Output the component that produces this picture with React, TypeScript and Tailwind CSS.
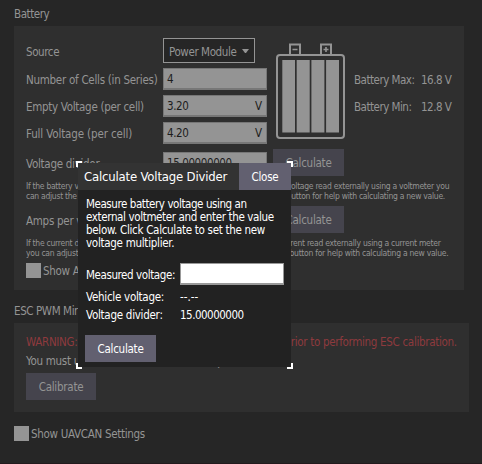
import React from "react";

type TextProps = { children: React.ReactNode; className?: string };

function Text({ children, className = "" }: TextProps) {
  return <span className={`block whitespace-pre ${className}`}>{children}</span>;
}

function Field({ value, unit }: { value: string; unit?: string }) {
  return (
    <div className="flex h-[22px] w-[104px] items-center justify-between border border-b-2 border-[#777777] bg-[#949494] pt-px pr-1 pl-[3px] text-[#1c1c1c]">
      <Text className="tracking-[-0.4px]">{value}</Text>
      {unit && <Text>{unit}</Text>}
    </div>
  );
}

function Row({ label, spacing, children, className = "h-[22px]" }: { label: string; spacing: string; children: React.ReactNode; className?: string }) {
  return (
    <div className={`flex w-[241px] items-center justify-between ${className}`}>
      <Text className={`w-[137px] pt-[2px] ${spacing}`}>{label}</Text>
      {children}
    </div>
  );
}

function DimButton({ children, className = "w-[71px]" }: TextProps) {
  return (
    <button className={`flex h-[27px] shrink-0 items-center justify-center bg-[#45444d] tracking-[-0.25px] text-[#949494] ${className}`}>
      {children}
    </button>
  );
}

function BatteryIcon() {
  return (
    <svg className="mt-[5px] ml-[9px] shrink-0" width="69" height="96" viewBox="0 0 69 96" fill="none" stroke="#949494" strokeWidth="2">
      <rect x="1" y="12" width="67" height="83" rx="3" />
      <path d="M14 11V1.6h10V11M45 11V1.6h10V11" />
      <path strokeWidth="1.6" d="M16.5 6.5h5M47.5 6.5h5M50 4v5" />
      <path fill="#949494" stroke="none" d="M6.3 17H19v72.5H6.3zM20.7 17h13v72.5h-13zM35.4 17h13v72.5h-13zM50.1 17H63v72.5H50.1z" />
    </svg>
  );
}

function Corner({ className }: { className: string }) {
  return <i className={`absolute size-[6px] border-white ${className}`} />;
}

export default function App() {
  return (
    <div className="relative h-[464px] w-[482px] overflow-hidden border-b border-[#231a1d] bg-[#262626] font-['DejaVu_Sans_Condensed','DejaVu_Sans',sans-serif] text-[11.5px] leading-[14px] font-stretch-condensed text-[#949494]">
      <div className="flex flex-col pt-[7px] pl-[14px]">
        <Text className="tracking-[-0.44px]">Battery</Text>
        <section className="mt-[5px] h-[264px] w-[450px] bg-[#2f2f2f] pt-3 pl-3">
          <div className="flex">
            <div className="flex flex-col gap-[5px]">
              <Row label="Source" spacing="tracking-[-0.4px]" className="h-[25px]">
                <div className="mr-auto flex h-[25px] w-[92px] items-center justify-between border border-[#949494] bg-[#262626] pr-[5px] pl-[5px]">
                  <Text className="pt-[2px] tracking-[-0.4px]">Power Module</Text>
                  <i className="w-[7px] border-x-[3px] border-t-[4px] border-x-transparent border-t-[#949494]" />
                </div>
              </Row>
              <Row label="Number of Cells (in Series)" spacing="tracking-[-0.27px]"><Field value="4" /></Row>
              <Row label="Empty Voltage (per cell)" spacing="tracking-[-0.3px]"><Field value="3.20" unit="V" /></Row>
              <Row label="Full Voltage (per cell)" spacing="tracking-[-0.14px]"><Field value="4.20" unit="V" /></Row>
            </div>
            <BatteryIcon />
            <div className="mt-[35px] ml-[9px] flex flex-col gap-[13px] tracking-[-0.5px]">
              <div className="flex"><Text className="w-[67px]">Battery Max:</Text><Text>16.8 V</Text></div>
              <div className="flex"><Text className="w-[67px]">Battery Min:</Text><Text>12.8 V</Text></div>
            </div>
          </div>
          <div className="mt-[5px] flex items-center gap-[6px]">
            <Row label="Voltage divider" spacing="tracking-[-0.28px]" className="h-[27px]"><Field value="15.00000000" /></Row>
            <DimButton>Calculate</DimButton>
          </div>
          <div className="mt-[5px] text-[8.5px] leading-[10px]">
            <Text className="tracking-[-0.28px]">If the battery voltage reported by the vehicle is largely different than the voltage read externally using a voltmeter you</Text>
            <Text className="tracking-[-0.28px]">can adjust the voltage multiplier value to correct this. Click the Calculate button for help with calculating a new value.</Text>
          </div>
          <div className="mt-[5px] flex items-center gap-[6px]">
            <Row label="Amps per volt" spacing="tracking-[-0.28px]" className="h-[27px]"><Field value="17.00000000" /></Row>
            <DimButton>Calculate</DimButton>
          </div>
          <div className="mt-[5px] text-[8.5px] leading-[10px]">
            <Text className="tracking-[-0.26px]">If the current draw reported by the vehicle is largely different than the current read externally using a current meter</Text>
            <Text className="tracking-[-0.27px]">you can adjust the amps per volt value to correct this. Click the Calculate button for help with calculating a new value.</Text>
          </div>
          <div className="mt-[5px] flex h-[15px] items-center gap-[2px]">
            <i className="size-[15px] bg-[#949494]" />
            <Text className="tracking-[-0.28px]">Show Advanced Settings</Text>
          </div>
        </section>
        <Text className="mt-[14px] tracking-[-0.4px]">ESC PWM Minimum and Maximum Calibration</Text>
        <section className="mt-[5px] h-[89px] w-[455px] bg-[#2f2f2f] pt-[12px] pl-3">
          <Text className="tracking-[-0.31px] text-[#8e3a3e]">WARNING: Propellers must be removed from vehicle prior to performing ESC calibration.</Text>
          <Text className="mt-[5px] tracking-[-0.3px]">You must use USB connection for this operation.</Text>
          <DimButton className="mt-[5px] w-[70px]">Calibrate</DimButton>
        </section>
        <div className="mt-[14px] flex h-[15px] items-center gap-[2px]">
          <i className="size-[15px] bg-[#949494]" />
          <Text className="tracking-[-0.3px]">Show UAVCAN Settings</Text>
        </div>
      </div>

      <div role="dialog" className="absolute top-[163px] left-[78px] h-[204px] w-[213px] bg-[#222222] text-white">
        <Corner className="-top-[2px] -left-[2px] border-t-2 border-l-2" />
        <Corner className="-top-[2px] -right-[2px] border-t-2 border-r-2" />
        <Corner className="-right-[2px] -bottom-[2px] border-r-2 border-b-2" />
        <Corner className="-bottom-[2px] -left-[2px] border-b-2 border-l-2" />
        <header className="relative flex h-[27px] items-center justify-between bg-[#333333] pl-[6px]">
          <Text className="pt-px text-[13px] tracking-[-0.18px]">Calculate Voltage Divider</Text>
          <button className="h-[27px] w-[52px] bg-[#626070] tracking-[-0.25px]">Close</button>
        </header>
        <div className="px-[7px] pt-2">
          <div className="pl-[1px] leading-[13px]">
            <Text className="tracking-[-0.43px]">Measure battery voltage using an</Text>
            <Text className="tracking-[-0.37px]">external voltmeter and enter the value</Text>
            <Text className="tracking-[-0.3px]">below. Click Calculate to set the new</Text>
            <Text className="tracking-[-0.28px]">voltage multiplier.</Text>
          </div>
          <div className="mt-[13px] flex items-center">
            <Text className="w-[95px] pt-px pl-[1px] tracking-[-0.41px]">Measured voltage:</Text>
            <div className="h-[22px] w-[104px] border border-b-2 border-[#999999] bg-white" />
          </div>
          <div className="mt-[5px] flex"><Text className="w-[95px] pl-[1px] tracking-[-0.27px]">Vehicle voltage:</Text><Text>--.--</Text></div>
          <div className="mt-[4px] flex"><Text className="w-[95px] pl-[1px] tracking-[-0.27px]">Voltage divider:</Text><Text className="tracking-[-0.5px]">15.00000000</Text></div>
          <button className="mt-[13px] block h-[27px] w-[71px] bg-[#626070] tracking-[-0.25px]">Calculate</button>
        </div>
      </div>
    </div>
  );
}
